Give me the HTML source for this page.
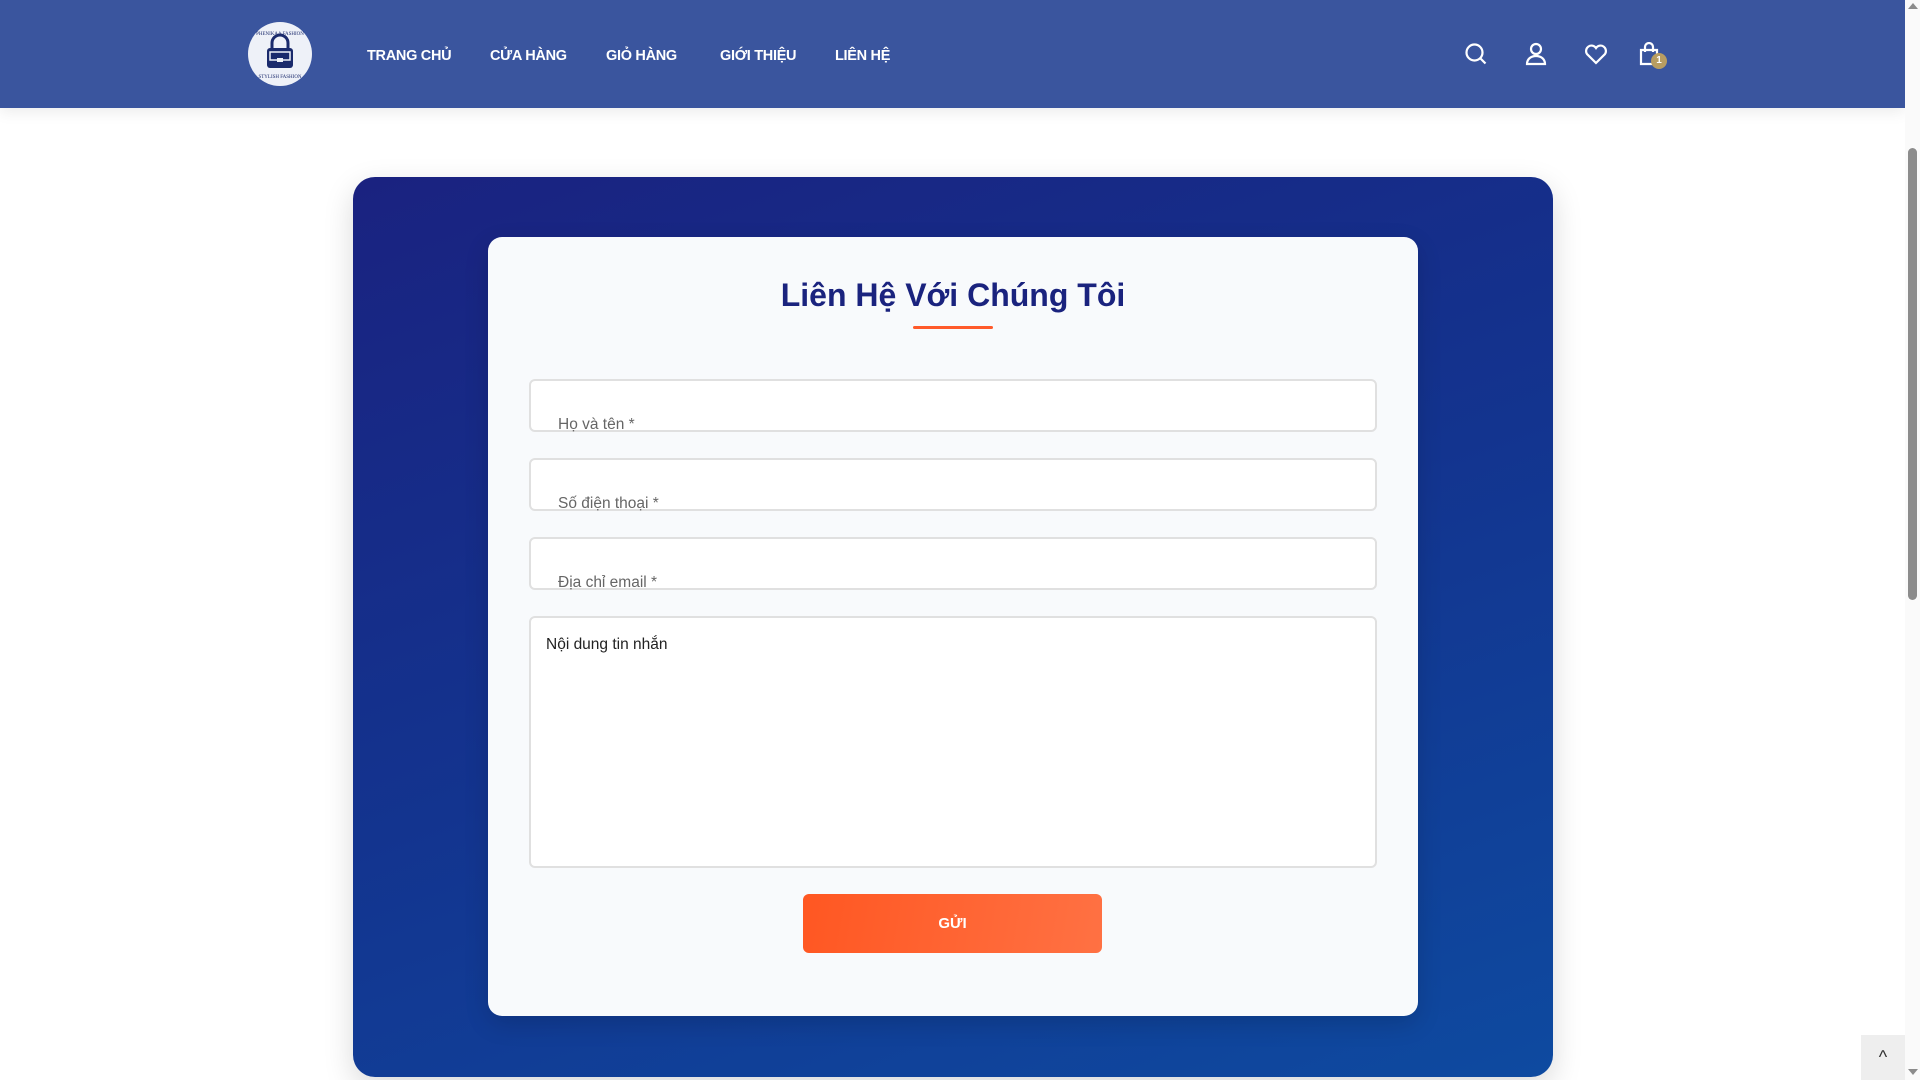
<!DOCTYPE html>
<html><head><meta charset="utf-8"><style>
*{box-sizing:border-box;margin:0;padding:0}
body{width:1920px;height:1080px;overflow:hidden;background:#fff;font-family:"Liberation Sans",sans-serif;position:relative}
.hdr{position:absolute;left:0;top:0;width:1905px;height:108px;background:#3a559e;box-shadow:0 4px 14px rgba(0,0,0,.08)}
.logo{position:absolute;left:248px;top:22px;width:64px;height:64px;border-radius:50%;background:#eef1f8}
.nav{position:absolute;top:48px;color:#fff;font-weight:700;font-size:14.5px;letter-spacing:-.3px}
.card{position:absolute;left:353px;top:177px;width:1200px;height:900px;border-radius:22px;background:linear-gradient(160deg,#1a2280 0%,#13348f 50%,#0e4aa0 100%);box-shadow:0 10px 30px rgba(0,0,0,.15)}
.inner{position:absolute;left:488px;top:237px;width:930px;height:779px;border-radius:14px;background:#f8fafc;box-shadow:0 8px 24px rgba(0,0,0,.15)}
h1{position:absolute;left:0;width:930px;top:40px;text-align:center;font-size:32px;color:#1a237e;font-weight:700}
.ul{position:absolute;left:425px;top:89px;width:80px;height:3px;background:#ff5a2a;border-radius:2px}
.inp{position:absolute;left:41px;width:848px;height:53px;background:#fff;border:2px solid #e0e0e0;border-radius:6px}
.inp span{position:absolute;left:27px;bottom:-4px;font-size:15.5px;color:#666}
.ta{position:absolute;left:41px;top:379px;width:848px;height:252px;background:#fff;border:2px solid #e0e0e0;border-radius:6px}
.ta span{position:absolute;left:15px;top:18px;font-size:15.5px;color:#222}
.btn{position:absolute;left:315px;top:657px;width:299px;height:59px;border-radius:6px;background:linear-gradient(100deg,#ff5722,#ff7143);color:#fff;font-weight:700;font-size:15px;text-align:center;line-height:59px}
.sb{position:absolute;left:1905px;top:0;width:15px;height:1080px;background:#fafafa}
.thumb{position:absolute;left:1908px;top:148px;width:9px;height:452px;background:#8c8c8c;border-radius:5px}
.top{position:absolute;left:1861px;top:1035px;width:44px;height:45px;background:#eeeeee;text-align:center;line-height:45px;color:#333;font-size:18px}
</style></head><body>
<div class="hdr">
 <div class="logo"><svg width="64" height="64" viewBox="0 0 64 64"><path d="M24 26v-5a8 8 0 0 1 16 0v5" fill="none" stroke="#1a2a6c" stroke-width="3"/><rect x="19" y="26" width="26" height="20" rx="3" fill="#1a2a6c"/><rect x="22" y="30" width="20" height="8" fill="none" stroke="#eef1f8" stroke-width="1.5"/><rect x="29" y="36" width="6" height="4" fill="#eef1f8"/><text x="32" y="13" font-size="5" text-anchor="middle" fill="#1a2a6c" font-family="Liberation Serif">PHENIKAA FASHION</text><text x="32" y="56" font-size="5" text-anchor="middle" fill="#1a2a6c" font-family="Liberation Serif">STYLISH FASHION</text></svg></div>
 <div class="nav" style="left:367px">TRANG CHỦ</div>
 <div class="nav" style="left:490px">CỬA HÀNG</div>
 <div class="nav" style="left:606px">GIỎ HÀNG</div>
 <div class="nav" style="left:720px">GIỚI THIỆU</div>
 <div class="nav" style="left:835px">LIÊN HỆ</div>
 <svg style="position:absolute;left:1464px;top:42px" width="24" height="24" viewBox="0 0 24 24" fill="none" stroke="#fff" stroke-width="2.2"><circle cx="10.5" cy="10.5" r="8"/><path d="M16.5 16.5l5 5"/></svg>
 <svg style="position:absolute;left:1524px;top:42px" width="24" height="24" viewBox="0 0 24 24" fill="none" stroke="#fff" stroke-width="2.2"><circle cx="12" cy="7" r="5"/><path d="M3 22c0-5 4-8 9-8s9 3 9 8z"/></svg>
 <svg style="position:absolute;left:1584px;top:43px" width="24" height="22" viewBox="0 0 24 22" fill="none" stroke="#fff" stroke-width="2.2"><path d="M12 20L3 11a5 5 0 0 1 9-6 5 5 0 0 1 9 6z"/></svg>
 <svg style="position:absolute;left:1638px;top:42px" width="22" height="24" viewBox="0 0 22 24" fill="none" stroke="#fff" stroke-width="2.2"><path d="M3 8h16v14H3z"/><path d="M7 10V5a4 4 0 0 1 8 0v5"/></svg>
 <div style="position:absolute;left:1651px;top:53px;width:16px;height:16px;border-radius:50%;background:#b89d62;color:#fff;font-size:10px;font-weight:700;text-align:center;line-height:16px">1</div>
</div>
<div class="card"></div>
<div class="inner">
 <h1>Liên Hệ Với Chúng Tôi</h1>
 <div class="ul"></div>
 <div class="inp" style="top:142px"><span>Họ và tên *</span></div>
 <div class="inp" style="top:221px"><span>Số điện thoại *</span></div>
 <div class="inp" style="top:300px"><span>Địa chỉ email *</span></div>
 <div class="ta"><span>Nội dung tin nhắn</span></div>
 <div class="btn">GỬI</div>
</div>
<div class="sb"></div>
<div class="thumb"></div>
<div style="position:absolute;left:1908px;top:3px;width:0;height:0;border-left:5px solid transparent;border-right:5px solid transparent;border-bottom:6px solid #8c8c8c"></div>
<div style="position:absolute;left:1908px;top:1069px;width:0;height:0;border-left:5px solid transparent;border-right:5px solid transparent;border-top:6px solid #8c8c8c"></div>
<div class="top">^</div>
</body></html>
